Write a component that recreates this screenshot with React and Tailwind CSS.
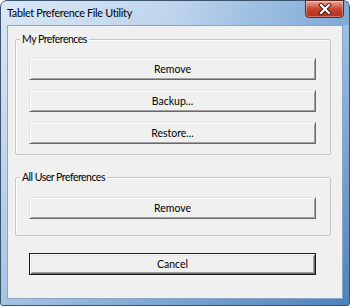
import React from "react";

const font = { fontFamily: 'Lato, "Noto Sans", Arial, sans-serif' };

function Btn({ children, def, className = "" }) {
  return (
    <div
      className={
        "h-[22px] flex items-center justify-center text-[10.5px] text-black bg-[#f0f0f0] " +
        (def
          ? "border border-[#1a1a1a] shadow-[inset_1px_1px_0_#ffffff,inset_-1px_-1px_0_#696969,inset_2px_2px_0_#e3e3e3,inset_-2px_-2px_0_#a0a0a0] "
          : "border border-t-[#e3e3e3] border-l-[#e3e3e3] border-b-[#696969] border-r-[#696969] shadow-[inset_1px_1px_0_#ffffff,inset_-1px_-1px_0_#a0a0a0] ") +
        className
      }
    >
      <span className="leading-none">{children}</span>
    </div>
  );
}

function Group({ label, children, className = "" }) {
  return (
    <div className={"relative mx-[7px] w-[316px] border border-[#c3c8cd] rounded-[2px] shadow-[inset_1px_1px_0_#ffffff] " + className}>
      <div className="absolute left-[4px] top-[-8px] px-[2px] bg-[#f0f0f0] text-[10.5px] leading-[14px] tracking-[-0.5px] text-black">
        {label}
      </div>
      {children}
    </div>
  );
}

export default function App() {
  return (
    <div className="w-[350px] h-[306px] bg-white" style={font}>
      <div className="w-[350px] h-[306px] rounded-t-[7px] rounded-b-[3px] border border-[#3c536d] bg-gradient-to-br from-[#dbe8f5] via-[#a5c4e4] to-[#4d82bd] flex flex-col">
        <div className="h-[24px] flex items-start justify-between bg-gradient-to-r from-transparent via-transparent to-[#5f93cc]/50">
          <div className="pl-[6px] pt-[4px] text-[10.8px] leading-[16px] tracking-[-0.3px] text-black">
            Tablet Preference File Utility
          </div>
          <div className="mr-[5px] mt-[-1px] w-[39px] h-[18px] rounded-b-[4px] border border-[#5a2a22] bg-gradient-to-b from-[#e9a99a] via-[#c8432d] to-[#b5301c] flex items-center justify-center shadow-[inset_0_0_0_1px_rgba(255,255,255,0.35)]">
            <svg width="14" height="12" viewBox="0 0 14 12">
              <path d="M3 2 L11 10 M11 2 L3 10" stroke="#3a1a14" strokeWidth="4" strokeLinecap="square" />
              <path d="M3 2 L11 10 M11 2 L3 10" stroke="#ffffff" strokeWidth="2.2" strokeLinecap="square" />
            </svg>
          </div>
        </div>
        <div className="mx-[6px] w-[336px] h-[274px] border border-[#8aa6c4] bg-[#f0f0f0] flex flex-col">
          <Group label="My Preferences" className="mt-[13px] h-[116px] pt-[18px]">
            <div className="flex flex-col gap-[10px] pl-[13px] w-[300px]">
              <Btn className="w-[287px]">Remove</Btn>
              <Btn className="w-[287px]">Backup...</Btn>
              <Btn className="w-[287px]">Restore...</Btn>
            </div>
          </Group>
          <Group label="All User Preferences" className="mt-[22px] h-[59px] pt-[19px]">
            <div className="pl-[13px]">
              <Btn className="w-[287px]">Remove</Btn>
            </div>
          </Group>
          <div className="mt-[17px] pl-[21px]">
            <Btn def className="w-[287px]">Cancel</Btn>
          </div>
        </div>
      </div>
    </div>
  );
}
